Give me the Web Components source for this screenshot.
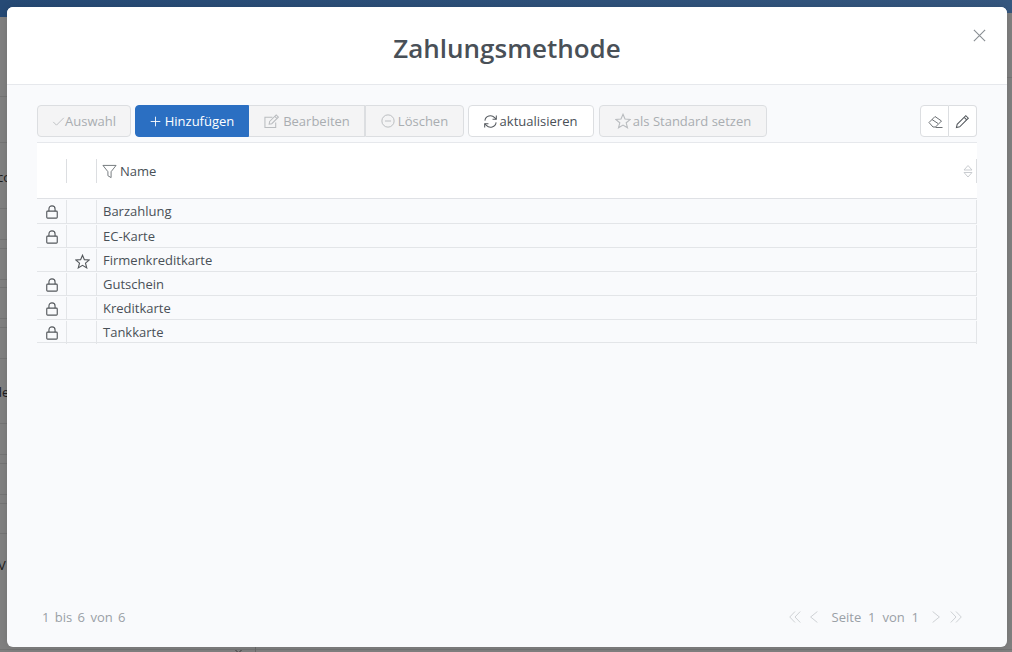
<!DOCTYPE html>
<html lang="de">
<head>
<meta charset="utf-8">
<title>Zahlungsmethode</title>
<style>
  html, body { margin: 0; height: 100%; overflow: hidden; }
  body { font-family: "Open Sans", "Liberation Sans", sans-serif; font-size: 13px; color: #495057; }
</style>
</head>
<body>
<page-backdrop>
  <payment-dialog heading="Zahlungsmethode">
    <div slot="toolbar" style="display:contents">
      <tool-button disabled icon="check" size="13" style="width:94px;margin-right:4px">Auswahl</tool-button>
      <tool-button primary icon="plus" size="11" gap="4" join="right" style="width:114px">Hinzufügen</tool-button>
      <tool-button disabled icon="edit" size="15" gap="4" join="left" style="width:116px;padding-left:1px">Bearbeiten</tool-button>
      <tool-button disabled icon="minus" size="14" gap="3" join="both" style="width:99px;margin-right:4px">Löschen</tool-button>
      <tool-button icon="refresh" size="15" gap="2" style="width:126px;margin-right:5px;padding-right:2px">aktualisieren</tool-button>
      <tool-button disabled icon="star" size="16" gap="2" style="width:168px">als Standard setzen</tool-button>
      <span style="flex:1"></span>
      <tool-button icon="eraser" size="16" join="right" style="width:29px"></tool-button>
      <tool-button icon="pencil" size="15" join="left-flush" style="width:28px"></tool-button>
    </div>
    <method-table slot="table">
      <method-row icon="lock" style="height:25px">Barzahlung</method-row>
      <method-row icon="lock">EC-Karte</method-row>
      <method-row icon="star">Firmenkreditkarte</method-row>
      <method-row icon="lock">Gutschein</method-row>
      <method-row icon="lock">Kreditkarte</method-row>
      <method-row icon="lock" style="height:23px">Tankkarte</method-row>
    </method-table>
    <pager-bar slot="footer"></pager-bar>
  </payment-dialog>
</page-backdrop>

<script>
const ICONS = {
  check: '<path d="M1.500 8.500 5.500 12.500 14.500 3.500"/>',
  plus: '<path d="M8 1v14M1 8h14"/>',
  edit: '<path d="M12.500 9v5.500H1V3.500h8"/><path d="M6 8l7-7 2.300 2.300-7 7-2.800.5z"/><path d="M11.500 2.500l2.300 2.300"/>',
  minus: '<circle cx="8" cy="8" r="7"/><path d="M4.500 8h7"/>',
  refresh: '<path d="M2 7a6 6 0 0 1 10.400-3.200L14 5.500"/><path d="M14.200 1.500v4h-4"/><path d="M14 9a6 6 0 0 1-10.400 3.200L2 10.500"/><path d="M1.800 14.500v-4h4"/>',
  star: '<path d="M8 1.300 10 6l5.200.4-4 3.400 1.300 5L8 12.100l-4.500 2.700 1.300-5-4-3.400L6 6z"/>',
  eraser: '<path d="M2 9.500 8 3.500l6.500 4.500L8.500 14H6z"/><path d="M5 6.500l6 4"/><path d="M8.500 14.500h7"/>',
  pencil: '<path d="M1.500 14.500l.8-3.500L11.500 1.800l2.700 2.700L5 13.700z"/><path d="M9.800 3.500l2.700 2.700"/>',
  lock: '<rect x="2" y="7" width="12" height="8" rx="1"/><path d="M4.500 7V4.500a3.500 3.500 0 0 1 7 0V7"/>',
  filter: '<path d="M1 1.500h14L9.700 8.200v6.300L6.300 12.500V8.200z"/>',
  close: '<path d="M2 2l12 12M14 2 2 14"/>',
  first: '<path d="M8 .7 1 8l7 7.300M15 .7 8 8l7 7.300"/>',
  prev: '<path d="M12.500 .7 3.500 8l9 7.300"/>',
  next: '<path d="M3.500 .7l9 7.300-9 7.300"/>',
  last: '<path d="M1 .7 8 8l-7 7.300M8 .7l7 7.300-7 7.300"/>',
};

function svgIcon(name, size, color, width) {
  return `<svg width="${size}" height="${size}" viewBox="0 0 16 16" fill="none" stroke="${color}" stroke-width="${width || 1.1}" aria-hidden="true">${ICONS[name]}</svg>`;
}

class PageBackdrop extends HTMLElement {
  constructor() {
    super();
    this.attachShadow({ mode: 'open' });
    const lines = [96, 142, 208, 239, 248, 279, 287, 318, 327, 358, 423, 454, 463, 494, 503, 533]
      .map(y => `<i class="line" style="top:${y}px"></i>`).join('');
    this.shadowRoot.innerHTML = `
      <style>
        :host { display: block; position: relative; width: 1012px; height: 652px; background: #808080; overflow: hidden; }
        .bar { position: absolute; left: 0; right: 0; top: 0; height: 13px; background: linear-gradient(90deg, #264a75, #35577f); }
        .bar-left { position: absolute; left: 0; width: 7px; top: 0; height: 17px; background: #264a75; }
        .line { position: absolute; left: 0; width: 8px; height: 1px; background: #747474; }
        .line-right { position: absolute; left: 1000px; right: 0; top: 77px; height: 1px; background: #747474; }
        .line-foot { position: absolute; left: 0; right: 0; top: 649px; height: 1px; background: #747474; }
        .under { position: absolute; color: #1c1c1c; font-size: 13px; line-height: 18px; }
        .foot { position: absolute; top: 647px; left: 255px; width: 1px; height: 5px; background: #6a6a6a; }
        .mark { position: absolute; top: 650px; left: 235px; }
        .dialog { position: absolute; left: 7px; top: 7px; box-shadow: 0 0 8px rgba(0, 0, 0, .12); border-radius: 6px; }
      </style>
      <div class="bar"></div>
      <div class="bar-left"></div>
      ${lines}
      <i class="line-right"></i>
      <i class="line-foot"></i>
      <span class="under" style="left:-3px;top:168px">co</span>
      <span class="under" style="left:-6px;top:383px">de</span>
      <span class="under" style="left:-2px;top:556px">V</span>
      <span class="foot"></span>
      <svg class="mark" width="7" height="2" fill="none" stroke="#3c3c3c"><path d="M.5 0l2 2M6.500 0l-2 2"/></svg>
      <div class="dialog"><slot></slot></div>
    `;
  }
}

class PaymentDialog extends HTMLElement {
  constructor() {
    super();
    this.attachShadow({ mode: 'open' });
    this.shadowRoot.innerHTML = `
      <style>
        :host { display: flex; flex-direction: column; width: 1000px; height: 640px; background: #f9fafc; border-radius: 6px; overflow: hidden; }
        header { display: flex; align-items: center; justify-content: center; position: relative; height: 77px; flex: none; background: #fff; border-bottom: 1px solid #e6e8ec; }
        h1 { margin: 0; font-size: 26px; font-weight: 600; color: #495057; line-height: 1; position: relative; top: 2px; }
        .close { position: absolute; top: 21px; right: 20px; display: flex; }
        .body { flex: 1; display: flex; flex-direction: column; padding: 20px 30px 0; min-height: 0; }
        .toolbar { display: flex; height: 32px; flex: none; }
        .table { flex: 1; min-height: 0; margin-top: 5px; }
        footer { flex: none; height: 60px; }
      </style>
      <header>
        <h1></h1>
        <span class="close">${svgIcon('close', 15, '#8a8f94', 1.2)}</span>
      </header>
      <div class="body">
        <div class="toolbar"><slot name="toolbar"></slot></div>
        <div class="table"><slot name="table"></slot></div>
      </div>
      <footer><slot name="footer"></slot></footer>
    `;
    this.shadowRoot.querySelector('h1').textContent = this.getAttribute('heading');
  }
}

class ToolButton extends HTMLElement {
  constructor() {
    super();
    this.attachShadow({ mode: 'open' });
    const disabled = this.hasAttribute('disabled');
    const primary = this.hasAttribute('primary');
    const color = primary ? '#fff' : disabled ? '#b9bcbf' : '#555a5f';
    const join = this.getAttribute('join') || '';
    const radius = { left: '0', both: '0 4px 4px 0', right: '4px 0 0 4px', 'left-flush': '0 4px 4px 0' }[join] || '4px';
    const leftBorder = join === 'left' || join === 'left-flush' ? 'border-left: 0;' : '';
    const shape = this.getAttribute('icon');
    const strokeWidth = shape === 'plus' ? 1.3 : shape === 'eraser' ? 1 : 1.1;
    this.shadowRoot.innerHTML = `
      <style>
        :host { display: flex; flex: none; box-sizing: border-box; align-items: center; justify-content: center; height: 32px;
          gap: ${this.getAttribute('gap') || 0}px; border: 1px solid ${primary ? '#2b6fc2' : '#dcdee1'}; border-radius: ${radius}; ${leftBorder}
          background: ${primary ? '#2b6fc2' : disabled ? '#f4f4f5' : '#fff'}; color: ${primary ? '#fff' : disabled ? '#a9adb1' : '#495057'}; font-size: 13px; }
        svg { display: block; }
      </style>
      ${svgIcon(shape, this.getAttribute('size'), shape === 'eraser' ? '#6b6f73' : color, strokeWidth)}<slot></slot>
    `;
  }
}

class MethodTable extends HTMLElement {
  constructor() {
    super();
    this.attachShadow({ mode: 'open' });
    this.shadowRoot.innerHTML = `
      <style>
        :host { display: block; }
        .head { display: grid; grid-template-columns: 30px 30px 1fr; padding: 16px 0 15px; box-sizing: border-box; height: 57px; background: #fff; border-top: 1px solid #e6e8ec; border-bottom: 1px solid #dfe1e5; }
        .cell { border-right: 1px solid #dcdee1; }
        .name { display: flex; align-items: center; padding-left: 5px; gap: 3px; font-size: 13px; color: #495057; }
        .sort { margin-left: auto; margin-right: 3px; display: flex; }
      </style>
      <div class="head">
        <div class="cell"></div>
        <div class="cell"></div>
        <div class="cell name">
          ${svgIcon('filter', 15, '#6f7479', 1)}<span>Name</span>
          <svg class="sort" width="10" height="14" viewBox="0 0 10 14" fill="none" stroke="#c9ccd0" stroke-width="1"><path d="M1 6 5 1.500 9 6zM1 8.500l4 4.500 4-4.500z"/></svg>
        </div>
      </div>
      <slot></slot>
    `;
  }
}

class MethodRow extends HTMLElement {
  constructor() {
    super();
    this.attachShadow({ mode: 'open' });
    const shape = this.getAttribute('icon');
    const glyph = svgIcon(shape, shape === 'lock' ? 14 : 15, '#54585c', shape === 'lock' ? 1.3 : 1.2);
    this.shadowRoot.innerHTML = `
      <style>
        :host { display: grid; grid-template-columns: 30px 30px 1fr; box-sizing: border-box; height: 24px; border-bottom: 1px solid #e3e5e8; font-size: 13px; color: #495057; }
        .cell { display: flex; align-items: flex-start; justify-content: center; border-right: 1px solid #e3e5e8; margin-top: 1px; }
        .cell svg { margin-top: 5px; }
        .cell.star svg { transform: translateX(1px); }
        .name { justify-content: flex-start; padding-left: 6px; line-height: 23px; }
      </style>
      <div class="cell">${shape === 'lock' ? glyph : ''}</div>
      <div class="cell star">${shape === 'star' ? glyph : ''}</div>
      <div class="cell name"><slot></slot></div>
    `;
  }
}

class PagerBar extends HTMLElement {
  constructor() {
    super();
    this.attachShadow({ mode: 'open' });
    this.shadowRoot.innerHTML = `
      <style>
        :host { display: flex; align-items: center; height: 60px; padding: 0 45px 0 35px; box-sizing: border-box; font-size: 13px; color: #9aa0a6; word-spacing: 2px; }
        .nav { margin-left: auto; display: flex; align-items: center; }
        .nav span { margin: 0 11px 0 12px; word-spacing: 3.500px; }
        .nav svg:nth-of-type(2) { margin-left: 7px; }
        .nav svg:nth-of-type(4) { margin-left: 8px; }
        svg { display: block; }
      </style>
      <span>1 bis 6 von 6</span>
      <div class="nav">
        ${svgIcon('first', 12, '#c5c8cc')}${svgIcon('prev', 12, '#c5c8cc')}
        <span>Seite 1 von 1</span>
        ${svgIcon('next', 12, '#c5c8cc')}${svgIcon('last', 12, '#c5c8cc')}
      </div>
    `;
  }
}

customElements.define('page-backdrop', PageBackdrop);
customElements.define('payment-dialog', PaymentDialog);
customElements.define('tool-button', ToolButton);
customElements.define('method-table', MethodTable);
customElements.define('method-row', MethodRow);
customElements.define('pager-bar', PagerBar);
</script>
</body>
</html>
